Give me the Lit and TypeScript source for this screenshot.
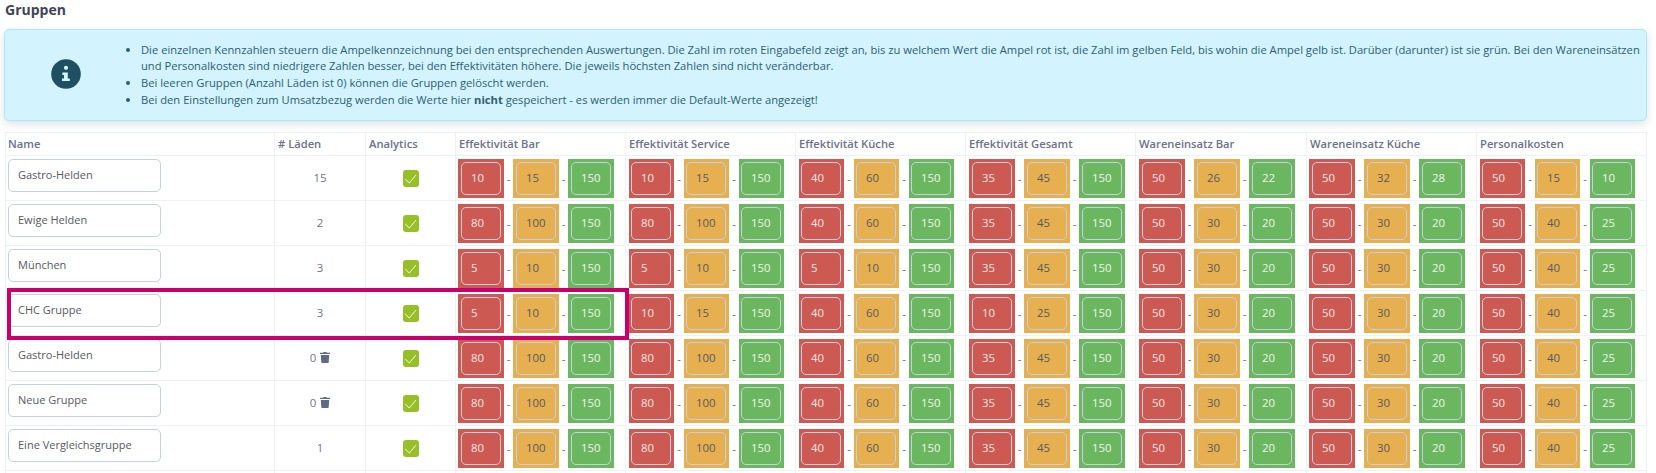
import { LitElement, html, css, svg } from "lit";
import { customElement } from "lit/decorators.js";

type Row = { name: string; count: number; del?: boolean; vals: number[][] };
const rest = [[50, 30, 20], [50, 30, 20], [50, 40, 25]];
const base = [[80, 100, 150], [80, 100, 150], [40, 60, 150], [35, 45, 150], ...rest];
const rows: Row[] = [
  { name: "Gastro-Helden", count: 15, vals: [[10, 15, 150], [10, 15, 150], [40, 60, 150], [35, 45, 150], [50, 26, 22], [50, 32, 28], [50, 15, 10]] },
  { name: "Ewige Helden", count: 2, vals: base },
  { name: "München", count: 3, vals: [[5, 10, 150], [5, 10, 150], [5, 10, 150], [35, 45, 150], ...rest] },
  { name: "CHC Gruppe", count: 3, vals: [[5, 10, 150], [10, 15, 150], [40, 60, 150], [10, 25, 150], ...rest] },
  { name: "Gastro-Helden", count: 0, del: true, vals: base },
  { name: "Neue Gruppe", count: 0, del: true, vals: base },
  { name: "Eine Vergleichsgruppe", count: 1, vals: base },
];
const heads = ["Effektivität Bar", "Effektivität Service", "Effektivität Küche", "Effektivität Gesamt", "Wareneinsatz Bar", "Wareneinsatz Küche", "Personalkosten"];
const widths = [170, 170, 170, 170, 171, 170, 170];
const colClass = ["tight", "narrow", "narrow", "", "", "tight", "narrow"];
const tones = ["red", "amber", "green"];

const check = svg`<path d="M2.2 9 6.3 13 13 5" fill="none" stroke="#fff" stroke-opacity=".9" stroke-width="1"/>`;
const trash = svg`<path fill="#5f6b85" d="M3.2.8 3.7 0h2.6l.5.8H10v1.3H0V.8zM.8 3h8.4l-.5 7.2a.9.9 0 0 1-.9.8H2.2a.9.9 0 0 1-.9-.8z"/>`;

@customElement("app-root")
export class AppRoot extends LitElement {
  static styles = css`
    :host { display: block; height: 473px; overflow: hidden; position: relative; background: #fff; font-family: "Open Sans", sans-serif; font-size: 11px; color: #575962; }
    .title { margin: 0; padding: 0 0 0 5px; height: 29px; box-sizing: border-box; font-size: 14px; line-height: 19px; font-weight: 700; color: #3f4458; }
    .alert { margin: 0 9px 0 4px; height: 92px; box-sizing: border-box; display: flex; align-items: center; background: #d3f3fe; border: 1px solid #ace8fb; border-radius: 5px; box-shadow: 0 3px 9px rgba(90, 100, 120, .2); color: #2b5f73; }
    .icon { width: 30px; height: 30px; margin: -3px 0 0 46px; flex: none; }
    .alert ul { margin: 0 0 0 46px; padding: 0 0 0 14px; font-size: 11.2px; line-height: 16.7px; }
    .alert b { font-weight: 700; }
    table { margin: 11px 0 0 5px; width: 1642px; table-layout: fixed; border-collapse: separate; border-spacing: 0; border-left: 1px solid #eef1f8; border-top: 1px solid #eef1f8; }
    th, td { border-right: 1px solid #eef1f8; border-bottom: 1px solid #eef1f8; padding: 0; box-sizing: border-box; }
    th { height: 23px; padding: 0 0 2px 3px; text-align: left; font-weight: 600; font-size: 11.2px; color: #6b7288; }
    th.first { padding-left: 2px; }
    td { height: 45px; }
    .name { vertical-align: top; padding: 3px 0 0 2px; }
    .name input { display: block; width: 153px; height: 33px; box-sizing: border-box; padding: 0 9px 2px; border: 1px solid #c6d0e0; border-radius: 5px; font: 11px "Open Sans", sans-serif; color: #575962; background: #fff; outline: none; }
    .count { text-align: center; color: #6f7688; font-size: 11.4px; padding-bottom: 2px; }
    .count span { display: inline-flex; align-items: center; gap: 4px; }
    .count svg { display: block; width: 10px; height: 11px; }
    .chk { display: block; width: 16px; height: 17px; margin: 0 auto; }
    .vals { padding-left: 3px; }
    .vals.tight { padding-left: 2px; }
    .vals > div { display: flex; align-items: center; }
    .sep { width: 9px; text-align: center; color: #5f6b85; font-size: 11.4px; }
    .box { width: 46px; height: 39px; box-sizing: border-box; padding: 3px; }
    .box input { display: block; width: 40px; height: 33px; box-sizing: border-box; padding: 0 9px 1px; border: 1px solid #c6d0e0; border-radius: 5px; background: transparent; font: 11.4px "Open Sans", sans-serif; outline: none; }
    .narrow .box { width: 45px; padding-left: 2px; }
    .narrow .sep { width: 10px; }
    .red { background: #cd5a52; } .red input { color: #f4e6e4; }
    .amber { background: #e6b051; } .amber input { color: #575962; }
    .green { background: #6bb760; } .green input { color: #eef5e8; }
    .mark { position: absolute; left: 7px; top: 288px; width: 622px; height: 52px; box-sizing: border-box; border: 4px solid #c9006b; pointer-events: none; }
  `;

  render() {
    return html`
      <h3 class="title">Gruppen</h3>
      <div class="alert">
        <svg class="icon" viewBox="0 0 30 30"><circle cx="15" cy="15" r="14.8" fill="#1f5062"/><circle cx="15" cy="8.8" r="2.1" fill="#d3f3fe"/><path fill="#d3f3fe" d="M11.4 13.5h5.4v6h2v2.6h-7.8v-2.6h2v-3.5h-1.6z"/></svg>
        <ul>
          <li>Die einzelnen Kennzahlen steuern die Ampelkennzeichnung bei den entsprechenden Auswertungen. Die Zahl im roten Eingabefeld zeigt an, bis zu welchem Wert die Ampel rot ist, die Zahl im gelben Feld, bis wohin die Ampel gelb ist. Darüber (darunter) ist sie grün. Bei den Wareneinsätzen und Personalkosten sind niedrigere Zahlen besser, bei den Effektivitäten höhere. Die jeweils höchsten Zahlen sind nicht veränderbar.</li>
          <li>Bei leeren Gruppen (Anzahl Läden ist 0) können die Gruppen gelöscht werden.</li>
          <li>Bei den Einstellungen zum Umsatzbezug werden die Werte hier <b>nicht</b> gespeichert - es werden immer die Default-Werte angezeigt!</li>
        </ul>
      </div>
      <table>
        <colgroup><col style="width:269px"/><col style="width:91px"/><col style="width:90px"/>${widths.map((w) => html`<col style="width:${w}px"/>`)}</colgroup>
        <thead><tr><th class="first">Name</th><th># Läden</th><th>Analytics</th>${heads.map((h) => html`<th>${h}</th>`)}</tr></thead>
        <tbody>
          ${rows.map((r) => html`<tr>
            <td class="name"><input .value=${r.name} /></td>
            <td class="count"><span>${r.count}${r.del ? html`<svg viewBox="0 0 10 11">${trash}</svg>` : ""}</span></td>
            <td><svg class="chk" viewBox="0 0 16 17"><rect width="16" height="17" rx="3" fill="#97bf27"/>${check}</svg></td>
            ${r.vals.map((v, c) => html`<td class="vals ${colClass[c]}"><div>${v.map((n, i) => html`${i ? html`<span class="sep">-</span>` : ""}<div class="box ${tones[i]}"><input .value=${String(n)} /></div>`)}</div></td>`)}
          </tr>`)}
          <tr><td></td><td></td><td></td>${heads.map(() => html`<td></td>`)}</tr>
        </tbody>
      </table>
      <div class="mark"></div>
    `;
  }
}
